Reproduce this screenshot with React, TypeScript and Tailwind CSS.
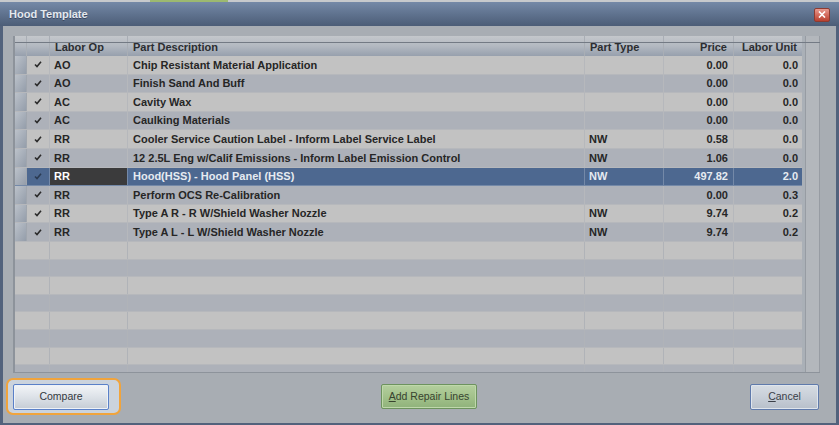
import React from "react";

type Line = { op: string; desc: string; type: string; price: string; unit: string };

const lines: Line[] = [
  { op: "AO", desc: "Chip Resistant Material Application", type: "", price: "0.00", unit: "0.0" },
  { op: "AO", desc: "Finish Sand And Buff", type: "", price: "0.00", unit: "0.0" },
  { op: "AC", desc: "Cavity Wax", type: "", price: "0.00", unit: "0.0" },
  { op: "AC", desc: "Caulking Materials", type: "", price: "0.00", unit: "0.0" },
  { op: "RR", desc: "Cooler Service Caution Label - Inform Label Service Label", type: "NW", price: "0.58", unit: "0.0" },
  { op: "RR", desc: "12 2.5L Eng w/Calif Emissions - Inform Label Emission Control", type: "NW", price: "1.06", unit: "0.0" },
  { op: "RR", desc: "Hood(HSS) - Hood Panel (HSS)", type: "NW", price: "497.82", unit: "2.0" },
  { op: "RR", desc: "Perform OCS Re-Calibration", type: "", price: "0.00", unit: "0.3" },
  { op: "RR", desc: "Type A R - R W/Shield Washer Nozzle", type: "NW", price: "9.74", unit: "0.2" },
  { op: "RR", desc: "Type A L - L W/Shield Washer Nozzle", type: "NW", price: "9.74", unit: "0.2" },
];

const SELECTED = 6;

function Check({ sel }: { sel?: boolean }) {
  return (
    <svg width="8" height="7" viewBox="0 0 8 7" className="block">
      <path d="M1 3.5 L3 5.5 L7 0.8" fill="none" stroke={sel ? "#2b3b52" : "#2a2a2a"} strokeWidth="1.6" />
    </svg>
  );
}

export default function App() {
  return (
    <div
      className="w-[839px] h-[425px] flex flex-col overflow-hidden bg-[#a8adb3] select-none"
      style={{ fontFamily: '"Liberation Sans", Arial, sans-serif' }}
    >
      {/* strip of the window behind */}
      <div className="h-[2px] flex bg-[#c6c9cc]">
        <div className="w-[150px]" />
        <div className="w-[78px] bg-[#9cb970]" />
      </div>

      {/* Title bar */}
      <div className="h-[24px] flex items-center justify-between pl-[9px] pr-[9px] bg-gradient-to-b from-[#7489a7] to-[#4c5d77]">
        <span className="text-[11px] font-bold text-[#e4e9ef] [text-shadow:0_1px_0_#3a4860]">Hood Template</span>
        <button className="w-[16px] h-[14px] mt-[1px] flex items-center justify-center rounded-[2px] border border-[#8e3b31] bg-gradient-to-b from-[#e79a90] via-[#d46a5c] to-[#b8402f]">
          <svg width="8" height="7" viewBox="0 0 8 7">
            <path d="M1 0.5 L7 6.5 M7 0.5 L1 6.5" stroke="#ffffff" strokeWidth="1.6" />
          </svg>
        </button>
      </div>

      {/* Body */}
      <div className="flex-1 flex flex-col border-l-[3px] border-r-[3px] border-b-[2px] border-[#52627c]">
        <div className="pt-[10px] pl-[10px]">
          <div className="relative w-[807px] h-[337px] flex border-l-2 border-b border-[#8d939b] bg-[#aab0b7] overflow-hidden">
            {/* table */}
            <div className="w-[787px] flex flex-col text-[11px] font-bold text-[#262626]">
              {/* header */}
              <div className="h-[20px] flex shrink-0 bg-gradient-to-b from-[#c4c7cb] via-[#b3b9c1] to-[#97a0ad] text-[#2b2d30]">
                <div className="w-[12px] border-r border-[#a9aeb5]" />
                <div className="w-[23px] border-r border-[#a9aeb5]" />
                <div className="w-[78px] border-r border-[#a9aeb5] pl-[5px] pt-[3px]">Labor Op</div>
                <div className="w-[457px] border-r border-[#a9aeb5] pl-[5px] pt-[3px]">Part Description</div>
                <div className="w-[79px] border-r border-[#a9aeb5] pl-[5px] pt-[3px]">Part Type</div>
                <div className="w-[70px] border-r border-[#a9aeb5] pr-[6px] pt-[3px] text-right">Price</div>
                <div className="w-[68px] pr-[5px] pt-[3px] text-right">Labor Unit</div>
              </div>

              {lines.map((l, i) => {
                const sel = i === SELECTED;
                const bg = sel ? "bg-[#4d6890]" : i % 2 === 0 ? "bg-[#c2c2c2]" : "bg-[#adb1b9]";
                const line = sel ? "border-[#7489a8]" : "border-[#b6b8bc]";
                return (
                  <div
                    key={i}
                    className={`h-[18.6px] flex shrink-0 items-center border-b ${line} ${bg} ${sel ? "text-[#e6ebf1]" : ""}`}
                  >
                    <div className="w-[12px] h-full border-r border-[#a0a6ae] bg-gradient-to-br from-[#bcc2ca] to-[#949daa]" />
                    <div className={`w-[23px] h-full border-r ${line} flex items-center justify-center`}>
                      <Check sel={sel} />
                    </div>
                    <div
                      className={`w-[78px] h-full border-r ${line} pl-[4px] flex items-center ${sel ? "bg-[#3b3b3c] text-white" : ""}`}
                    >
                      {l.op}
                    </div>
                    <div className={`w-[457px] h-full border-r ${line} pl-[5px] flex items-center whitespace-nowrap overflow-hidden`}>
                      {l.desc}
                    </div>
                    <div className={`w-[79px] h-full border-r ${line} pl-[4px] flex items-center`}>{l.type}</div>
                    <div className={`w-[70px] h-full border-r ${line} pr-[5px] flex items-center justify-end`}>{l.price}</div>
                    <div className="w-[68px] h-full pr-[4px] flex items-center justify-end">{l.unit}</div>
                  </div>
                );
              })}

              {Array.from({ length: 8 }).map((_, i) => (
                <div
                  key={`e${i}`}
                  className={`h-[17.6px] flex shrink-0 border-b border-[#b6b8bc] ${i % 2 === 0 ? "bg-[#c2c2c2]" : "bg-[#adb1b9]"}`}
                >
                  <div className="w-[35px] border-r border-[#b0b3b8]" />
                  <div className="w-[78px] border-r border-[#b0b3b8]" />
                  <div className="w-[457px] border-r border-[#b0b3b8]" />
                  <div className="w-[79px] border-r border-[#b0b3b8]" />
                  <div className="w-[70px] border-r border-[#b0b3b8]" />
                  <div className="w-[68px]" />
                </div>
              ))}
            </div>

            <div className="w-[3px]" />
            {/* empty vertical scroll track */}
            <div className="w-[15px] h-full border-l border-r border-[#979ca3] bg-[#b3b7bc]" />

            {/* panel outline drawn over the header */}
            <div className="absolute left-0 right-0 top-[6px] h-px bg-[#737a84] pointer-events-none" />
          </div>
        </div>

        {/* Buttons */}
        <div className="mt-[11px] h-[26px] flex text-[10.5px] text-[#333840]">
          <div className="relative ml-[10px] w-[96px] h-full">
            <div className="absolute left-[-7px] top-[-6px] w-[115px] h-[37px] rounded-[7px] border-2 border-[#f1a43c] bg-[#cbd3dd]" />
            <button className="relative w-full h-full rounded-[2px] border border-[#5a80c8] bg-gradient-to-b from-[#f3f5f8] via-[#dde2e8] to-[#c5ccd5] shadow-[inset_0_0_0_1px_#eef2f7]">
              Compare
            </button>
          </div>
          <button className="ml-[272px] w-[96px] h-[25px] rounded-[2px] border border-[#6d935e] bg-gradient-to-b from-[#b4cf9e] via-[#a3c28b] to-[#8fb27a] text-[#37432f] shadow-[inset_0_0_0_1px_#bfd8ab]">
            <span className="underline">A</span>dd Repair Lines
          </button>
          <button className="ml-auto mr-[17px] w-[69px] h-full rounded-[2px] border border-[#5f7aab] bg-gradient-to-b from-[#d6dce3] via-[#c8cfd8] to-[#b7bfca] text-[#3a3f48] shadow-[inset_0_0_0_1px_#dfe5ec]">
            <span className="underline">C</span>ancel
          </button>
        </div>
      </div>
    </div>
  );
}
